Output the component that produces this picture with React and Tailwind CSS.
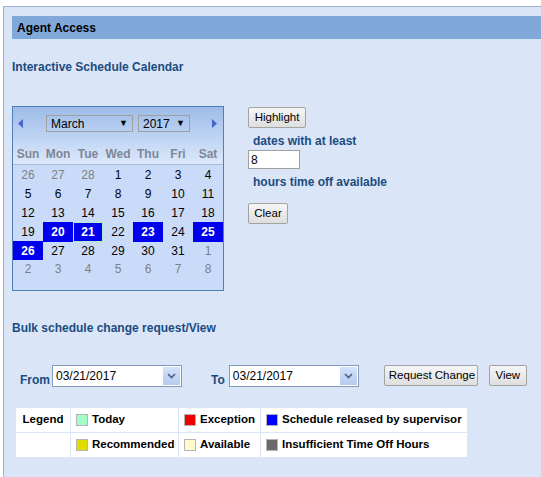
import React from "react";

const font = { fontFamily: '"Liberation Sans", Arial, sans-serif' };

const weeks = [
  [[26, "o"], [27, "o"], [28, "o"], [1], [2], [3], [4]],
  [[5], [6], [7], [8], [9], [10], [11]],
  [[12], [13], [14], [15], [16], [17], [18]],
  [[19], [20, "s"], [21, "t"], [22], [23, "s"], [24], [25, "s"]],
  [[26, "s"], [27], [28], [29], [30], [31], [1, "o"]],
  [[2, "o"], [3, "o"], [4, "o"], [5, "o"], [6, "o"], [7, "o"], [8, "o"]],
];

const Btn = ({ children, className = "" }) => (
  <button
    type="button"
    className={`h-[21px] px-[4px] whitespace-nowrap border border-[#a3a3a3] rounded-[2px] bg-gradient-to-b from-[#f6f6f6] to-[#dedede] text-[11.5px] text-black leading-none ${className}`}
  >
    {children}
  </button>
);

const DateBox = ({ value }) => (
  <div className="flex items-stretch w-[130px] h-[22px] bg-white border border-[#7f9db9]">
    <div className="flex-1 flex items-center pl-[3px] text-[12px] text-black">{value}</div>
    <div className="w-[17px] m-px bg-gradient-to-b from-[#d4e2f9] to-[#b5caef] flex items-center justify-center">
      <svg width="9" height="6" viewBox="0 0 9 6">
        <path d="M1 1 L4.5 4.5 L8 1" fill="none" stroke="#4d6185" strokeWidth="1.6" />
      </svg>
    </div>
  </div>
);

const Swatch = ({ color }) => (
  <span className={`inline-block shrink-0 w-[12px] h-[12px] border border-[#b5b5b5] mr-[4px] ${color}`} />
);

const Calendar = () => (
  <div className="w-[212px] h-[185px] border border-[#4f7fb6] bg-[#c9dbf8]">
    <div className="bg-gradient-to-b from-[#9dbce8] to-[#dce8fc] border-b border-[#a9b9cf]">
      <div className="flex items-center pt-[8px] h-[25px]">
        <svg width="5" height="9" viewBox="0 0 5 9" className="ml-[5px]">
          <polygon points="5,0 0,4.5 5,9" fill="#4467c8" />
        </svg>
        <div className="ml-[23px] w-[87px] h-[17px] border border-[#a0a0a0] flex items-center justify-between pl-[4px] pr-[4px] text-[12px]">
          <span>March</span>
          <span className="text-[9px]">▼</span>
        </div>
        <div className="ml-[5px] w-[52px] h-[17px] border border-[#a0a0a0] flex items-center justify-between pl-[4px] pr-[4px] text-[12px]">
          <span>2017</span>
          <span className="text-[9px]">▼</span>
        </div>
        <svg width="5" height="9" viewBox="0 0 5 9" className="ml-[22px]">
          <polygon points="0,0 5,4.5 0,9" fill="#4467c8" />
        </svg>
      </div>
      <div className="grid grid-cols-7 mt-[11px] h-[21px] items-center text-center text-[12px] font-bold text-[#7f8794]">
        {["Sun", "Mon", "Tue", "Wed", "Thu", "Fri", "Sat"].map((d) => (
          <div key={d}>{d}</div>
        ))}
      </div>
    </div>
    {weeks.map((w, i) => (
      <div key={i} className={`grid grid-cols-7 ${i === 5 ? "h-[14px]" : "h-[19px]"}`}>
        {w.map(([n, k], j) => (
          <div
            key={j}
            className={`flex items-center justify-center text-[12px] ${
              k === "o"
                ? "text-[#808080]"
                : k === "s"
                ? "bg-[#0000ee] text-white font-bold"
                : k === "t"
                ? "bg-[#0000ee] text-white font-bold border border-[#a8f0c8]"
                : "text-black"
            }`}
          >
            {n}
          </div>
        ))}
      </div>
    ))}
  </div>
);

const Cell = ({ children }) => (
  <div className="bg-white h-[24px] flex items-center pl-[5px] whitespace-nowrap overflow-hidden">{children}</div>
);

export default function App() {
  return (
    <div style={font} className="w-[541px] h-[477px] overflow-hidden bg-white pt-[6px] pl-[3px]">
      <div className="h-full bg-[#dbe5f8] border-l border-t border-[#9cb1d1] pl-[8px] pt-[9px]">
        <div className="h-[23px] bg-[#80a8d9] flex items-center pl-[5px] text-[12px] font-bold text-black">
          Agent Access
        </div>

        <div className="mt-[21px] h-[14px] leading-[14px] text-[12px] font-bold text-[#1a4c80]">
          Interactive Schedule Calendar
        </div>

        <div className="flex mt-[32px]">
          <Calendar />
          <div className="ml-[24px] mt-px flex flex-col items-start">
            <Btn className="w-[58px]">Highlight</Btn>
            <div className="mt-[6px] ml-[5px] h-[14px] leading-[14px] text-[12px] font-bold text-[#1a4c80]">
              dates with at least
            </div>
            <div className="mt-[2px] w-[52px] h-[19px] bg-white border border-[#a0a0a0] flex items-center pl-[2px] text-[12px]">
              8
            </div>
            <div className="mt-[6px] ml-[5px] h-[14px] leading-[14px] text-[12px] font-bold text-[#1a4c80]">
              hours time off available
            </div>
            <Btn className="mt-[14px] w-[40px]">Clear</Btn>
          </div>
        </div>

        <div className="mt-[30px] h-[14px] leading-[14px] text-[12px] font-bold text-[#1a4c80]">
          Bulk schedule change request/View
        </div>

        <div className="mt-[30px] flex items-end pl-[8px]">
          <span className="text-[12px] font-bold text-[#1a4c80] leading-[14px] mr-[2px]">From</span>
          <DateBox value="03/21/2017" />
          <span className="ml-[29px] text-[12px] font-bold text-[#1a4c80] leading-[14px] mr-[4px]">To</span>
          <DateBox value="03/21/2017" />
          <Btn className="ml-[25px] mb-px w-[94px]">Request Change</Btn>
          <Btn className="ml-[11px] mb-px w-[38px]">View</Btn>
        </div>

        <div className="mt-[21px] ml-[4px] w-[452px] grid grid-cols-[54px_107px_81px_206px] gap-[1px] text-[11.5px] font-bold text-black">
          <div className="bg-white h-[24px] flex items-center justify-center">Legend</div>
          <Cell>
            <Swatch color="bg-[#a2fdc8]" />
            Today
          </Cell>
          <Cell>
            <Swatch color="bg-[#ee0000]" />
            Exception
          </Cell>
          <Cell>
            <Swatch color="bg-[#0000ff]" />
            Schedule released by supervisor
          </Cell>
          <div className="bg-white h-[24px]" />
          <Cell>
            <Swatch color="bg-[#e0dc00]" />
            Recommended
          </Cell>
          <Cell>
            <Swatch color="bg-[#fffbcc]" />
            Available
          </Cell>
          <Cell>
            <Swatch color="bg-[#6b6b6b]" />
            Insufficient Time Off Hours
          </Cell>
        </div>
      </div>
    </div>
  );
}
